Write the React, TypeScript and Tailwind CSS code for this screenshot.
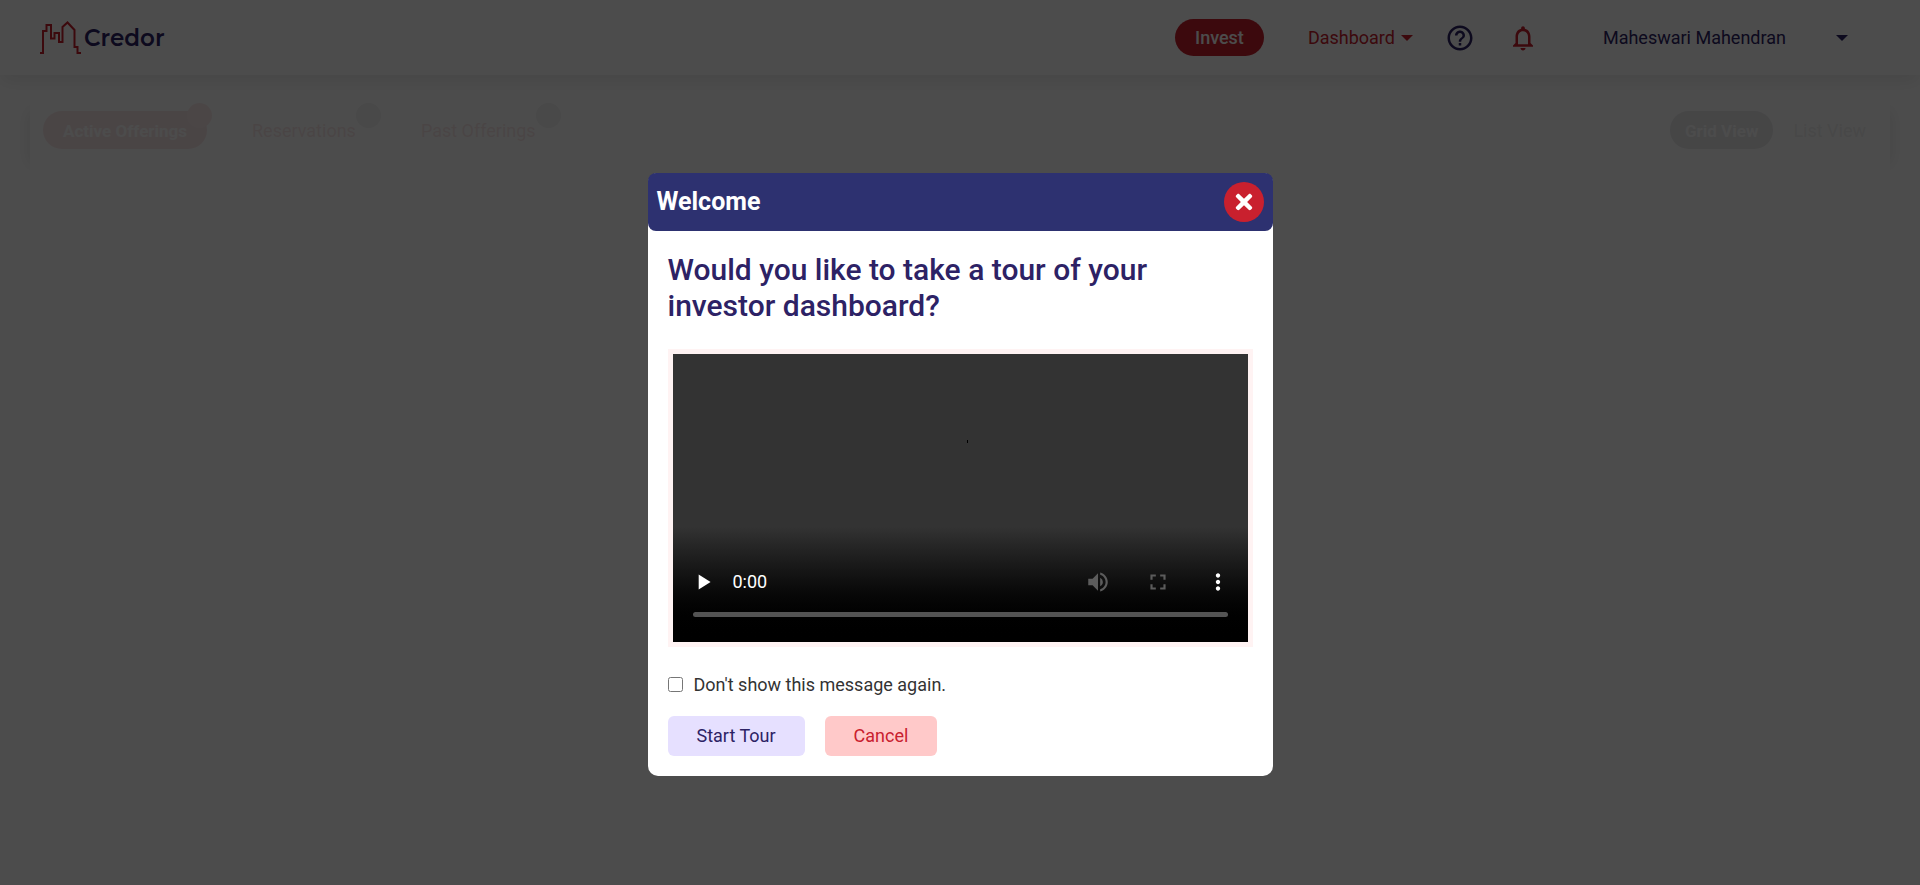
import { MdHelpOutline, MdNotificationsNone, MdPlayArrow, MdVolumeUp, MdFullscreen, MdMoreVert } from "react-icons/md";
import { FaTimes } from "react-icons/fa";

const tabs = [
  { label: "Active Offerings", active: true },
  { label: "Reservations", active: false },
  { label: "Past Offerings", active: false },
];

function Caret() {
  return (
    <svg width="12" height="6" viewBox="0 0 12 6" fill="currentColor" aria-hidden="true">
      <path d="M0 0H12L6 6Z" />
    </svg>
  );
}

function Logo() {
  return (
    <a href="#" className="flex items-center gap-0.5 text-[#2d2265]">
      <svg width="42" height="34" viewBox="0 0 42 34" fill="none" stroke="#c9202e" strokeWidth="2" aria-hidden="true">
        <path d="M0 32H3V10H6.500V4H11V17.500H14.500V12H19V21H22.500V6L27.500 1.500L34.500 9V26H37.500V32H41" />
      </svg>
      <span className="font-[Montserrat,Inter,sans-serif] text-[23px] leading-8 font-semibold">Credor</span>
    </a>
  );
}

function Header() {
  return (
    <header className="flex h-[75px] items-center justify-between bg-white pr-[72px] pl-10 shadow-[0_8px_16px_-2px_rgba(0,0,0,0.08)]">
      <Logo />
      <nav className="flex items-center text-[18px] leading-6 text-[#2d2265]">
        <button className="h-[37px] rounded-full bg-[#c9202e] px-5 font-medium text-white">Invest</button>
        <button className="ml-11 flex items-center gap-1.5 text-[#c9202e]">
          Dashboard
          <Caret />
        </button>
        <button aria-label="Help" className="ml-8"><MdHelpOutline size={30} /></button>
        <button aria-label="Notifications" className="ml-[33px] text-[#c9202e]"><MdNotificationsNone size={30} /></button>
        <button className="ml-[65px] flex items-center gap-[50px]">
          Maheswari Mahendran
          <Caret />
        </button>
      </nav>
    </header>
  );
}

function OfferingsBar() {
  return (
    <section className="mx-[30px] mt-5 flex h-[85px] items-start justify-between bg-white px-[13px] pt-4 text-[17px] leading-6 shadow-[16px_0_16px_-16px_rgba(0,0,0,0.1),-16px_0_16px_-16px_rgba(0,0,0,0.1)]">
      <div className="flex gap-[25px] opacity-10">
        {tabs.map((tab) => (
          <button
            key={tab.label}
            className={tab.active ? "relative h-[38px] rounded-full bg-[#c9202e] px-5 pt-0.5 font-bold text-white" : "relative h-[38px] px-5 pt-0.5 text-[18px] text-[#c9202e]"}
          >
            {tab.label}
            <span className={tab.active ? "absolute -top-2 -right-[5px] size-[25px] rounded-full bg-[#d84a50]" : "absolute -top-2 -right-[5px] size-[25px] rounded-full bg-[#999999]"} />
          </button>
        ))}
      </div>
      <div className="flex opacity-10">
        <button className="h-[38px] rounded-full bg-[#333348] px-[15px] pt-0.5 font-bold text-white">Grid View</button>
        <button className="h-[38px] pt-0.5 pr-[11px] pl-5 text-[18px] text-[#777777]">List View</button>
      </div>
    </section>
  );
}

function VideoPlayer() {
  return (
    <div className="bg-[#fff3f3] p-[5px]">
      <div className="flex aspect-[2/1] flex-col justify-between bg-linear-to-b from-[#333333] from-60% to-black">
        <div className="flex flex-1 items-center justify-center pb-10 pl-[14px]">
          <span className="h-[3px] w-px bg-black" />
        </div>
        <div className="px-5 pb-[25px] text-white">
          <div className="-mx-[3px] flex items-center justify-between pb-[17px]">
            <div className="flex items-center gap-[17px]">
              <button aria-label="Play"><MdPlayArrow size={26} /></button>
              <span className="text-[18px] leading-6">0:00</span>
            </div>
            <div className="flex items-center gap-[34px]">
              <button aria-label="Mute" disabled className="text-[#5c5c5c]"><MdVolumeUp size={26} /></button>
              <button aria-label="Fullscreen" disabled className="text-[#5c5c5c]"><MdFullscreen size={26} /></button>
              <button aria-label="More options"><MdMoreVert size={26} /></button>
            </div>
          </div>
          <div className="h-[5px] rounded-full bg-[#545454]" />
        </div>
      </div>
    </div>
  );
}

function WelcomeDialog() {
  return (
    <div role="dialog" aria-modal="true" aria-labelledby="welcome-title" className="w-[625px] rounded-[10px] bg-white">
      <div className="flex h-[58px] items-center justify-between rounded-lg bg-[#2d3170] px-[9px] text-white">
        <h2 id="welcome-title" className="text-[25px] leading-8 font-bold">Welcome</h2>
        <button aria-label="Close" className="flex size-10 items-center justify-center rounded-full bg-[#c9202e]">
          <FaTimes size={24} />
        </button>
      </div>
      <div className="px-5 pt-[21px] pb-5">
        <h3 className="mb-[25px] text-[30px] leading-9 font-medium text-[#2d2265]">
          Would you like to take a tour of your investor dashboard?
        </h3>
        <VideoPlayer />
        <label className="mt-[26px] flex items-center gap-[11px] text-[18px] leading-6 text-[#333333]">
          <input type="checkbox" className="size-[15px]" />
          Don't show this message again.
        </label>
        <div className="mt-[19px] flex gap-5 text-[18px] leading-6">
          <button className="h-10 rounded-md bg-[#e6e0ff] px-[29px] text-[#2d2265]">Start Tour</button>
          <button className="h-10 rounded-md bg-[#ffc9c9] px-[29px] text-[#c9202e]">Cancel</button>
        </div>
      </div>
    </div>
  );
}

export default function App() {
  return (
    <div className="min-h-screen bg-white font-[Roboto,sans-serif]">
      <Header />
      <OfferingsBar />
      <div className="fixed inset-0 flex items-start justify-center bg-black/70 pt-[173px]">
        <WelcomeDialog />
      </div>
    </div>
  );
}
